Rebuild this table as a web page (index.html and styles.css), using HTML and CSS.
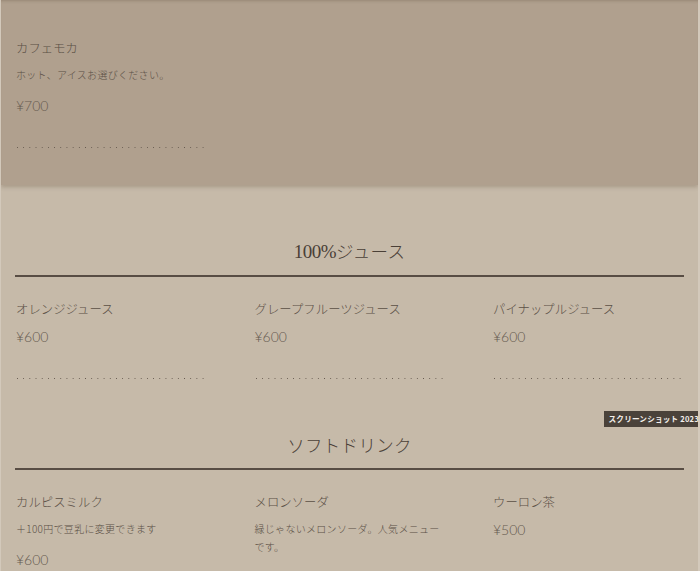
FILE: index.html
```html
<!DOCTYPE html>
<html lang="ja">
<head>
<meta charset="utf-8">
<title>Menu</title>
<link rel="stylesheet" href="styles.css">
</head>
<body>
<div class="page">
  <section class="band">
    <div class="grid">
      <div class="item">
        <div class="name">カフェモカ</div>
        <div class="desc">ホット、アイスお選びください。</div>
        <div class="price">¥700</div>
        <div class="dots"></div>
      </div>
    </div>
  </section>

  <section class="section">
    <h2 class="heading"><span class="num">100%</span>ジュース</h2>
    <div class="grid">
      <div class="item">
        <div class="name">オレンジジュース</div>
        <div class="price">¥600</div>
        <div class="dots"></div>
      </div>
      <div class="item">
        <div class="name">グレープフルーツジュース</div>
        <div class="price">¥600</div>
        <div class="dots"></div>
      </div>
      <div class="item">
        <div class="name">パイナップルジュース</div>
        <div class="price">¥600</div>
        <div class="dots"></div>
      </div>
    </div>
  </section>

  <section class="section">
    <h2 class="heading">ソフトドリンク</h2>
    <div class="grid">
      <div class="item">
        <div class="name">カルピスミルク</div>
        <div class="desc">＋100円で豆乳に変更できます</div>
        <div class="price">¥600</div>
        <div class="dots"></div>
      </div>
      <div class="item">
        <div class="name">メロンソーダ</div>
        <div class="desc">緑じゃないメロンソーダ。人気メニューです。</div>
        <div class="price">¥500</div>
        <div class="dots"></div>
      </div>
      <div class="item">
        <div class="name">ウーロン茶</div>
        <div class="price">¥500</div>
        <div class="dots"></div>
      </div>
    </div>
  </section>

  <div class="tooltip">スクリーンショット 2023</div>
</div>
</body>
</html>
```

FILE: styles.css
```css
html, body {
  margin: 0;
  padding: 0;
}
body {
  background: #c6baa9;
  font-family: "Noto Sans CJK JP", "Noto Sans", sans-serif;
  font-weight: 300;
  color: #5f544a;
  overflow: hidden;
  height: 571px;
}
.page {
  position: relative;
  height: 571px;
  overflow: hidden;
  border-left: 1px solid #d3c9bb;
  border-right: 2px solid #d3c9bb;
}
.band {
  background: #b0a08e;
  height: 185px;
  box-sizing: border-box;
  padding: 38px 15px 0 14px;
  box-shadow: 0 2px 4px rgba(80, 60, 40, 0.25), inset 0 3px 3px -2px rgba(80, 60, 40, 0.25);
  position: relative;
  z-index: 1;
}
.grid {
  display: grid;
  grid-template-columns: 190px 190px 190px;
  column-gap: 48.5px;
}
.section {
  padding: 52px 14px 0 14px;
}
.heading {
  margin: 0 0 22px 0;
  padding-bottom: 9px;
  border-bottom: 2px solid #584d44;
  text-align: center;
  font-size: 17.5px;
  line-height: 28px;
  font-weight: 300;
  color: #4a4037;
  letter-spacing: 0.3px;
}
.num {
  font-family: "Liberation Serif", serif;
  font-weight: 400;
  font-size: 19px;
  letter-spacing: -0.5px;
}
.item {
  display: flex;
  flex-direction: column;
}
.name {
  font-size: 12.3px;
  line-height: 20px;
  letter-spacing: 0.1px;
  margin: 0 0 8px 1px;
  color: #5a4f45;
}
.desc {
  font-size: 10px;
  line-height: 18px;
  letter-spacing: 0.3px;
  margin: 0 0 12px 1px;
  color: #5a4f45;
}
.price {
  font-family: "Lato", "Open Sans", sans-serif;
  font-weight: 300;
  font-size: 14px;
  line-height: 20px;
  color: #675b51;
  margin: 0 0 31px 1px;
}
.dots {
  height: 1px;
  margin-left: 2px;
  background-image: linear-gradient(to right, #665a4f 0, #665a4f 1px, transparent 1px);
  background-size: 6.2px 1px;
  background-repeat: repeat-x;
}
.tooltip {
  position: absolute;
  top: 411px;
  right: -2px;
  height: 16px;
  padding: 0 1px 0 5px;
  background: #4a423a;
  color: #f3efea;
  font-family: "Noto Sans CJK JP", sans-serif;
  font-weight: 700;
  font-size: 7.6px;
  letter-spacing: 0.2px;
  line-height: 16px;
  white-space: nowrap;
  z-index: 2;
}
```
